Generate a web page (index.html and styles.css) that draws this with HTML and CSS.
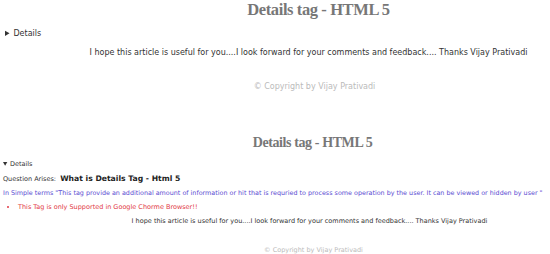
FILE: index.html
```html
<!DOCTYPE html>
<html>
<head>
<meta charset="utf-8">
<link rel="stylesheet" href="styles.css">
</head>
<body>
<div class="shot shot-large">
  <h1 class="title">Details tag - HTML 5</h1>
  <details class="det">
    <summary>Details</summary>
  </details>
  <p class="hope">I hope this article is useful for you....I look forward for your comments and feedback.... Thanks Vijay Prativadi</p>
  <p class="copy">© Copyright by Vijay Prativadi</p>
</div>
<div class="shot shot-small">
  <h1 class="title">Details tag - HTML 5</h1>
  <details class="det" open>
    <summary>Details</summary>
    <p class="question">Question Arises: &nbsp;<b>What is Details Tag - Html 5</b></p>
    <p class="simple">In Simple terms "This tag provide an additional amount of information or hit that is requried to process some operation by the user. It can be viewed or hidden by user "</p>
    <ul class="notes">
      <li>This Tag is only Supported in Google Chorme Browser!!</li>
    </ul>
  </details>
  <p class="hope">I hope this article is useful for you....I look forward for your comments and feedback.... Thanks Vijay Prativadi</p>
  <p class="copy">© Copyright by Vijay Prativadi</p>
</div>
</body>
</html>
```
FILE: styles.css
```css
html, body {
  margin: 0;
  padding: 0;
  background: #ffffff;
  overflow: hidden;
}
body {
  width: 550px;
  height: 254px;
  font-family: "DejaVu Sans", Verdana, sans-serif;
  color: #333;
}
.shot {
  width: 624px;
  overflow: hidden;
  box-sizing: border-box;
}
.shot-large {
  height: 127px;
  font-size: 8px;
  padding-left: 5px;
}
.shot-small {
  height: 127px;
  font-size: 6.5px;
  padding-left: 3px;
}
.title {
  margin: 0;
  font-family: "Liberation Serif", "Times New Roman", serif;
  font-weight: bold;
  color: #777;
  text-align: center;
  letter-spacing: -0.4px;
}
.shot-large .title {
  font-size: 16.5px;
  line-height: 20px;
  padding-left: 8px;
}
.shot-small .title {
  font-size: 14px;
  line-height: 17px;
  margin-top: 7px;
  padding-right: 2px;
}
.det summary {
  cursor: pointer;
}
.shot-large .det {
  margin-top: 8px;
  line-height: 12px;
}
.shot-small .det {
  margin-top: 9px;
  line-height: 8px;
}
.hope {
  margin: 0;
  text-align: center;
}
.shot-large .hope {
  margin-top: 7px;
  line-height: 12px;
  padding-right: 12px;
}
.shot-small .hope {
  margin-top: 6px;
  line-height: 8px;
  padding-right: 8px;
}
.copy {
  margin: 0;
  text-align: center;
  color: #bbb;
}
.shot-large .copy {
  margin-top: 22px;
  line-height: 12px;
}
.shot-small .copy {
  margin-top: 21px;
  line-height: 8px;
}
.question {
  margin: 7px 0 0;
}
.question b {
  color: #222;
  font-size: 1.18em;
}
.simple {
  margin: 6px 0 0;
  color: #5a4bd2;
  font-size: 6.4px;
  white-space: nowrap;
}
.notes {
  margin: 6px 0 0;
  padding-left: 15px;
  color: #e23a46;
}
```
